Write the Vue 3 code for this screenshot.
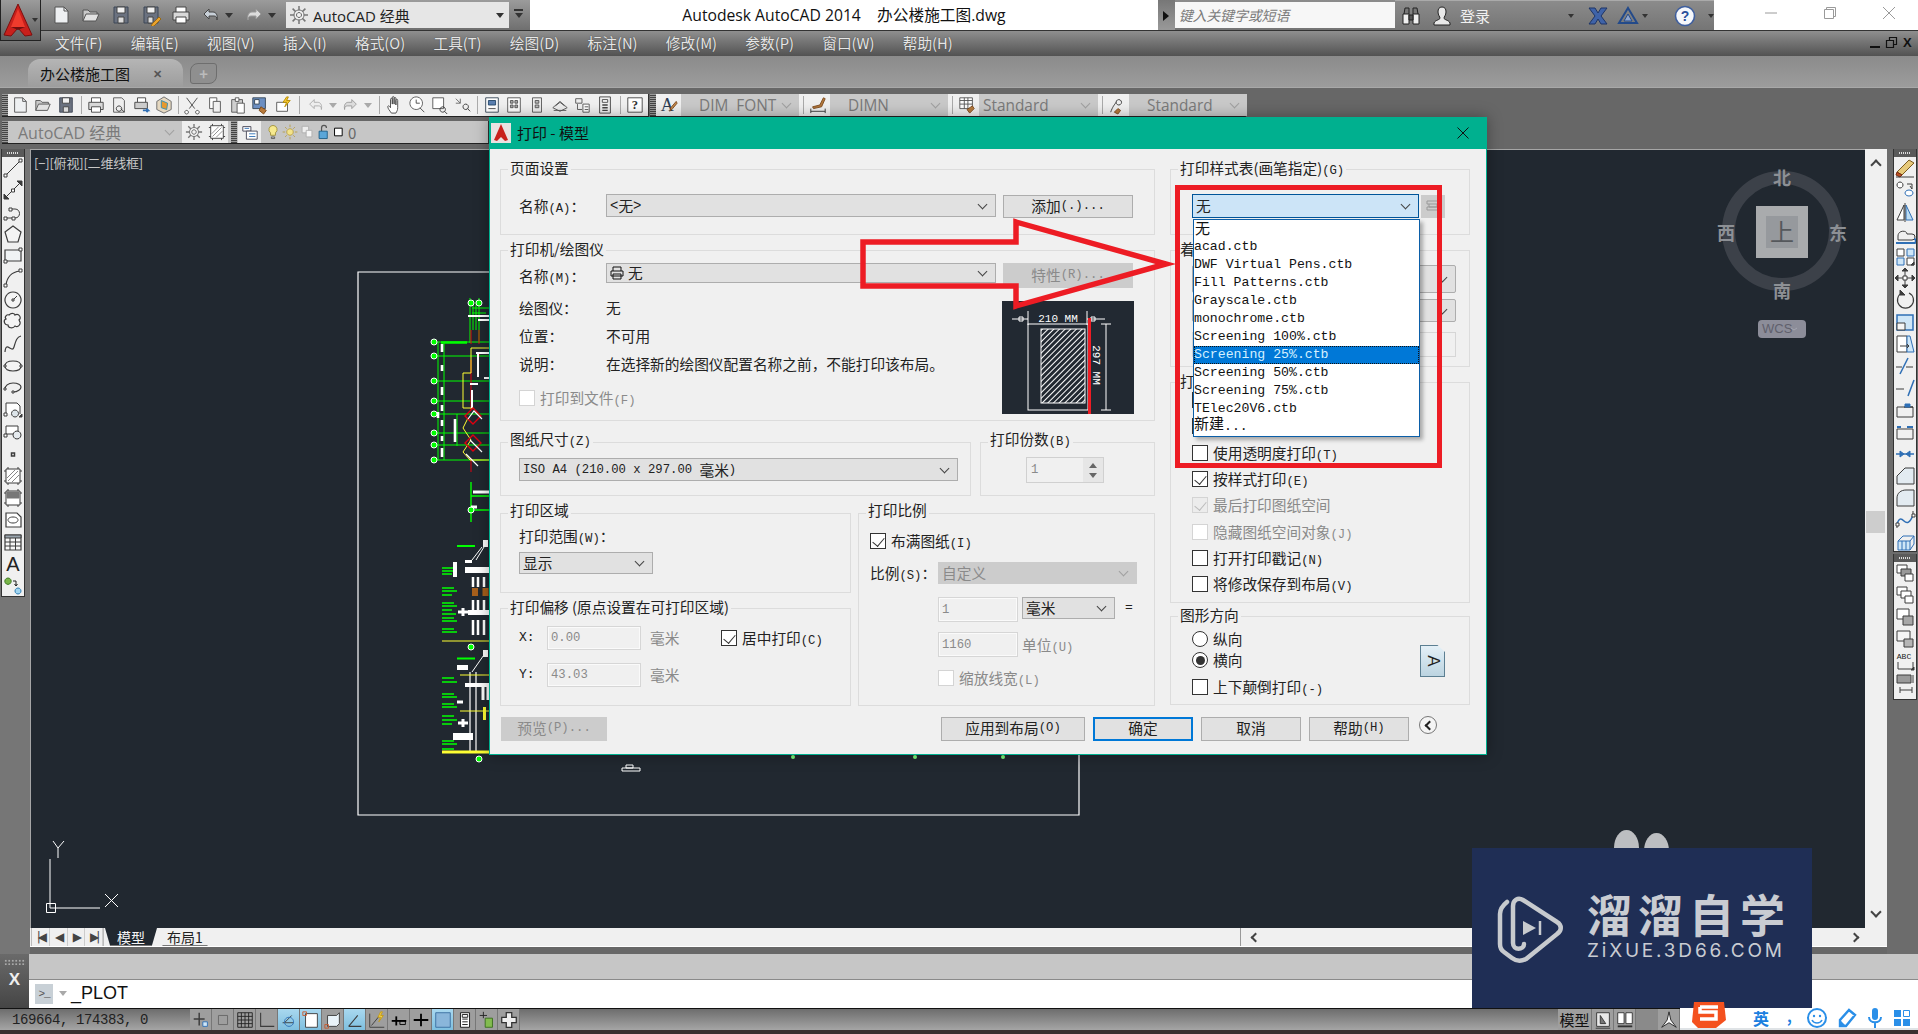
<script setup>
import { h } from 'vue'

const K = '#3c3c3c'
const L = '#2f6fb5'
const ICONS = {
  new: [['M5 3h9l4 4v12H5z', '#555', '#eef0f2'], ['M14 3v4h4', '#555', 'none']],
  open: [['M3 17V6h5l2 2h7v2', '#555', '#c9c9c9'], ['M3 17l3-7h13l-3 7z', '#555', '#e2e2e2']],
  save: [['M4 3h14v16H4z', '#3d4656', '#6b7280'], ['M7 3h8v6H7z', '#444', '#f1f1f1'], ['M8 13h6v6H8z', '#444', '#ddd']],
  saveas: [['M4 3h14v16H4z', '#3d4656', '#6b7280'], ['M7 3h8v6H7z', '#444', '#f1f1f1'], ['M8 13h5v6H8z', '#444', '#ddd'], ['M12 20l7-7 2 2-7 7-3 1z', '#9a6a14', '#eaa32e']],
  print: [['M6 8V3h10v5', '#444', '#fff'], ['M3 8h16v8H3z', '#444', '#d8d8d8'], ['M6 13h10v6H6z', '#444', '#fff']],
  undo: [['M9 5L4 10l5 5v-3h5c2 0 3 1 3 4 1-5-1-8-4-8H9z', '#444', '#c8d0d8']],
  redo: [['M13 5l5 5-5 5v-3H8c-2 0-3 1-3 4-1-5 1-8 4-8h4z', '#9a9a9a', '#dcdcdc']],
  undog: [['M9 5L4 10l5 5v-3h5c2 0 3 1 3 4 1-5-1-8-4-8H9z', '#aaa', '#eee']],
  gear: [['M11 6a5 5 0 1 0 .01 0z', '#666', '#f2f2f2'], ['M11 8.500a2.500 2.500 0 1 0 .01 0z', '#666', 'none'], ['M11 2v4M11 16v4M2 11h4M16 11h4M4.600 4.600l3 3M14.400 14.400l3 3M4.600 17.400l3-3M14.400 7.600l3-3', '#777', 'none', 1.5]],
  preview: [['M5 3h9l3 3v13H5z', '#555', '#eee'], ['M11 12a3 3 0 1 0 .01 0zM13 15l4 4', '#333', 'none']],
  publish: [['M6 8V3h9v5', '#444', '#fff'], ['M3 8h14v7H3z', '#444', '#ccc'], ['M12 17h6l-2-2M18 17l-2 2', L, 'none', 2]],
  d3: [['M11 2l8 5v9l-8 4-8-4V7z', '#666', '#e5d8c0'], ['M8 6l7 3-1 7-6-2z', '#2f8fb5', '#e79a2d']],
  cut: [['M5 3l9 12M17 3L8 15', '#444', 'none'], ['M5 17a2 2 0 1 0 .01 0zM17 17a2 2 0 1 0 .01 0z', '#444', '#fff']],
  copy: [['M5 3h8v12H5z', '#555', '#fff'], ['M9 7h8v12H9z', '#555', '#f1f1f1']],
  paste: [['M4 5h12v14H4z', '#555', '#cfcfcf'], ['M8 3h4v4H8z', '#555', '#fff'], ['M10 9h8v11h-8z', '#555', '#fff']],
  match: [['M3 3h14v12H3z', '#345', '#6c8fc2'], ['M5 5h5v5H5z', '#345', '#fff'], ['M12 13l6 4-3 4-5-4z', '#7a4a1a', '#b97a3a']],
  bolt: [['M4 8h12v10H4z', '#555', '#fff'], ['M15 2l-4 6h4l-2 5 6-7h-4l2-4z', '#b58a00', '#f7c92f']],
  hand: [['M7 20c-2-3-4-5-4-7s2-1 3 1V5c0-2 2-2 2 0v5V3c0-2 2-2 2 0v7V4c0-2 2-2 2 0v7V6c0-2 2-2 2 0v8c0 3-1 4-2 6z', '#444', '#fff']],
  zoomr: [['M9 2a7 7 0 1 0 .01 0z', '#555', '#fff'], ['M9 5v4h4M13 14l5 5', '#444', 'none']],
  zoomw: [['M3 3h12v12H3z', '#555', '#fff'], ['M14 13a3 3 0 1 0 .01 0zM16 18l3 3', '#333', 'none']],
  zoomp: [['M3 4l5 5M8 4v5H3', '#666', 'none'], ['M14 10a3 3 0 1 0 .01 0zM16 15l3 3', '#333', 'none']],
  props: [['M4 3h14v16H4z', '#345', '#fff'], ['M7 6h8v5H7z', '#246', '#5a7fb0'], ['M7 15h8', '#444', 'none']],
  dc: [['M4 3h14v16H4z', '#555', '#fff'], ['M7 6h3v3H7zM12 6h3v3h-3zM7 11h3v3H7zM12 11h3v3h-3z', '#555', '#aaa']],
  tp: [['M6 3h10v16H6z', '#555', '#eee'], ['M9 6h4v3H9zM9 11h4v3H9z', '#555', '#bbb']],
  sheet: [['M3 14l8-7 8 7-8 4z', '#555', '#eee'], ['M6 12l5-4 5 4M4 17h14', '#555', 'none']],
  mkup: [['M4 4h7v5H4z', '#555', '#eee'], ['M12 10h7v9h-7z', '#555', '#fff'], ['M6 10v6h5M14 13h4M14 16h4', '#555', 'none']],
  calc: [['M5 2h12v18H5z', '#444', '#eee'], ['M8 5h6v3H8z', '#444', '#fff'], ['M8 11h6M8 14h6M8 17h6', '#444', 'none', 1.5]],
  help: [['M3 3h16v16H3z', '#444', '#fff'], { t: '?', x: 11, y: 16, s: 14, c: '#333', w: 'bold' }],
  layer: [['M3 5h9v5H3z', '#445', '#fff'], ['M7 10h12v9H7z', '#445', '#fff'], ['M5 7h5M10 13h7M10 16h7', L, 'none']],
  bulb: [['M11 3a5 5 0 0 1 3 9v3H8v-3a5 5 0 0 1 3-9z', '#9a8a30', '#f6e98e'], ['M9 17h4v2H9z', '#555', '#bbb']],
  sun: [['M11 7a4 4 0 1 0 .01 0z', '#b59b3a', '#f3e38b'], ['M11 2v3M11 17v3M2 11h3M17 11h3M5 5l2 2M15 15l2 2M5 17l2-2M15 7l2-2', '#b59b3a', 'none']],
  lay3: [['M5 4h8v8H5z', '#aaa', '#eee'], ['M10 9h7v8h-7z', '#aaa', '#f6f6f6']],
  lock: [['M8 10V6a3 3 0 0 1 6 0', '#555', 'none', 1.5], ['M5 10h10v9H5z', '#15577f', '#5ba6d8']],
  sq: [['M4 5h12v12H4z', '#000', '#fff', 1.5]],
  dimf: [{ t: 'A', x: 9, y: 18, s: 20, c: '#2d3e55' }, ['M13 14l6-7 1 2-5 6-3 3z', '#7c4a1e', '#c68a4c']],
  dimn: [['M3 18h16M3 15v5M19 15v5', '#333', 'none'], ['M5 13l8-2 4-8 2 1-4 9-9 2z', '#7c4a1e', '#b57a3c']],
  tab: [['M3 3h14v12H3z', '#555', '#fff'], ['M3 6h14M8 3v12M12 3v12M3 10h14', '#555', 'none'], ['M11 16l6-4 2 3-5 5z', '#7c4a1e', '#b57a3c']],
  ml: [['M4 19c2-6 4-8 6-11', '#333', 'none'], ['M13 5a3 3 0 1 0 .01 0z', '#333', 'none'], ['M8 19l4-4 3 2-3 4z', '#7c4a1e', '#b57a3c']],
  // left toolbar
  line: [['M4 18L18 4', K, 'none'], ['M2 17h3v3H2zM17 2h3v3h-3z', K, '#fff']],
  xline: [['M3 19L19 3', K, 'none'], ['M9.500 10h3v3h-3z', K, '#fff'], ['M2 15v5h5zM15 2h5v5z', K, K]],
  pline: [['M4 17h9c6 0 6-9 0-9H9', K, 'none'], ['M2 16h3v3H2zM10 16h3v3h-3zM7 7h3v3H7z', K, '#fff']],
  polygon: [['M11 3l8 6-3 10H6L3 9z', K, '#f4f4f4', 1.2]],
  rect: [['M3 5h16v11H3z', K, '#f0f3f5', 1.2], ['M2 15h3v3H2zM17 3h3v3h-3z', K, '#fff']],
  arc: [['M4 18C5 10 10 5 18 4', K, 'none', 1.2], ['M2 17h3v3H2zM17 2h3v3h-3z', K, '#fff']],
  circle: [['M11 3a8 8 0 1 0 .01 0z', K, '#f4f4f4', 1.2], ['M10 10h2v2h-2zM12 10l3-3', K, 'none']],
  cloud: [['M7 4c3-3 6-1 6 0 4-2 7 3 4 5 3 4-1 8-4 6-2 3-7 2-7-1-4 0-5-5-2-6-2-2 1-5 3-4z', K, '#f4f4f4', 1.2]],
  spline: [['M3 19c1-12 7 2 9-5s3-10 7-11', K, 'none', 1.2]],
  ellipse: [['M11 6c5 0 8 2 8 5s-3 5-8 5-8-2-8-5 3-5 8-5z', K, '#f4f4f4', 1.2], ['M2 10h2v2H2zM18 10h2v2h-2z', K, '#fff']],
  earc: [['M3 12c0-3 3-6 8-6s8 2 8 4-3 5-8 5', K, 'none', 1.2], ['M2 11h2v2H2zM10 14h2v2h-2z', K, '#fff']],
  insert: [['M4 15V4h11l3 3v8', K, '#fff'], ['M13 11a3.500 3.500 0 1 0 .01 0z', K, '#dde5ea'], ['M2 14h3v3H2z', K, '#fff'], ['M17 18l3-3v3z', K, K]],
  block: [['M4 13V5h12v8z', K, '#fff'], ['M15 10a4 4 0 1 0 .01 0z', K, '#e6ebef'], ['M2 13h3v3H2z', K, '#fff']],
  point: [['M9.500 10h3v3h-3z', K, 'none', 1.5]],
  hatch: [['M4 4h14v14H4zM2 6h2M18 6h2M2 16h2M18 16h2M6 2v2M16 2v2M6 18v2M16 18v2', K, '#fff'], ['M5 13l8-8M6 16l10-10M10 17l7-7', '#888', 'none']],
  grad: [['M4 4h14v14H4zM2 6h2M18 6h2M2 16h2M18 16h2M6 2v2M16 2v2M6 18v2M16 18v2', K, '#fff'], ['M5 5h12v6H5z', '#777', '#777']],
  region: [['M4 4h11l4 4v10H4z', K, '#fff', 1.2], ['M11 8c4 0 5 2 5 3s-1 3-5 3-5-2-5-3 1-3 5-3z', K, 'none']],
  table: [['M3 4h16v15H3z', K, '#f8f8f8', 1.2], ['M3 4h16v3H3z', K, '#9aa5ae'], ['M3 11h16M3 15h16M8 7v12M13.500 7v12', K, 'none']],
  atext: [{ t: 'A', x: 11, y: 18, s: 20, c: '#222', f: 'Liberation Sans' }],
  addsel: [['M6 3a3.200 3.200 0 1 0 .01 0z', '#3f7a22', '#79b64a'], ['M11 6h3v5M12.500 9l1.500 2 1.500-2', '#222', 'none'], ['M16 13a3 3 0 1 0 .01 0z', '#2f7fb5', '#9fd4f0']],
  // right
  erase: [['M3 15L15 3l5 3-12 12z', '#7a5a20', '#e7c97a'], ['M3 15l5 3-2 2-4-2z', '#7a2a10', '#b94e20'], ['M2 20h18', K, 'none']],
  copyo: [['M6 3a3 3 0 1 0 .01 0z', K, '#fff'], ['M15 11a4 3 0 1 0 .01 0z', L, '#fff'], ['M13 5h5v5M16 7l2 3', K, 'none']],
  mirror: [['M10 4v15L3 19z', K, '#fff'], ['M12 4v15l7 0z', L, '#bcdcf3'], ['M11 2v19', K, 'none']],
  offset: [['M4 17v-4c0-6 9-6 9-2h5a2 2 0 0 1 0 6z', K, 'none'], ['M2 20h18a2 2 0 0 0 0-4', L, 'none', 2]],
  array: [['M3 4h7v7H3z', K, '#fff'], ['M13 4h7v7h-7zM3 13h7v7H3z', L, '#cfe6f7'], ['M13 13h7v7h-7z', K, '#fff'], ['M17 20l3-3v3z', K, K]],
  move: [['M11 2v18M2 11h18', K, 'none'], ['M11 1l-3 3h6zM11 21l-3-3h6zM1 11l3-3v6zM21 11l-3-3v6z', K, K], ['M9 9h4v4H9z', K, '#fff']],
  rotate: [['M15 4a8 8 0 1 1-7 0', K, 'none', 1.2], ['M6 1v5h5z', K, K]],
  scale: [['M3 4h16v15H3z', L, '#cfe6f7', 1.5], ['M3 12h8v7H3z', K, '#f6f6f6']],
  stretch: [['M3 3h10v16H3z', K, '#fff'], ['M13 3h3l4 16h-7z', L, '#cfe6f7'], ['M6 13h9M13 11l2 2-2 2', K, 'none']],
  trim: [['M2 12h6M12 12h7', K, 'none'], ['M6 19l8-16', L, 'none', 1.5]],
  extend: [['M2 12h8', K, 'none'], ['M14 19l6-16', L, 'none', 1.5]],
  brk1: [['M3 8h16v10H3z', K, 'none'], ['M10 8h9', '#222', 'none'], ['M11 5h5v3h-5z', L, L]],
  brk2: [['M3 8h16v10H3z', K, 'none'], ['M3 6h4M13 6h6', L, 'none', 2]],
  join: [['M2 11h18', L, 'none', 1.5], ['M6 8l4 3-4 3zM16 8l-4 3 4 3z', L, L]],
  chamfer: [['M3 19V11l8-8h9v16z', K, '#e3ebf1']],
  fillet: [['M3 19v-8c0-5 4-8 9-8h8v16z', K, '#e3ebf1']],
  blend: [['M3 19v-4M19 6V2', K, 'none'], ['M3 15c2-6 4-6 7-3s6 2 9-6', L, 'none', 1.5], ['M2 14h3v3H2zM18 5h3v3h-3z', K, '#fff']],
  explode: [['M4 10h12v9H4z', L, '#cfe6f7'], ['M4 10l5-5h11l-4 5M16 19l4-6V5', L, 'none'], ['M8 10v9M12 10v9', L, 'none']],
  ord1: [['M3 3h10v8H3z', K, '#fff'], ['M7 7h10v7H7z', K, '#999'], ['M11 12h8v7h-8z', K, '#fff']],
  ord2: [['M3 3h10v8H3z', K, '#fff'], ['M7 7h10v7H7z', K, '#fff'], ['M11 12h8v7h-8z', K, '#fff']],
  ord3: [['M3 3h12v10H3z', K, '#fff'], ['M9 10h10v9H9z', K, '#a7a7a7']],
  ord4: [['M3 3h13v10H3z', K, '#f4f4f4'], ['M10 11h9v8h-9z', K, '#b5b5b5']],
  ordt: [{ t: 'ABC', x: 10, y: 9, s: 8, c: '#222', f: 'Liberation Mono' }, ['M4 12v7h15v-7', K, 'none'], ['M17 20l3-3v3z', K, K]],
  ordd: [['M3 3h14v8H3z', K, '#999'], ['M19 3v8M6 18h12M6 15v6M18 15v6', K, 'none']],
  // status
  snap: [['M9 3v14M3 10h12', K, 'none', 1.6], ['M13 13h5v5h-5z', L, '#cfe6f7']],
  dots: [['M6 6h10v10H6z', '#666', 'none', 1]],
  gridi: [['M3 3h16v16H3zM3 7h16M3 11h16M3 15h16M7 3v16M11 3v16M15 3v16', '#222', 'none', 1]],
  ortho: [['M4 3v15h15', K, 'none', 1.2]],
  polar: [['M6 14l8-8M4 14h12', K, 'none'], ['M11 8a5 5 0 1 0 .01 0z', L, 'none']],
  osnap: [['M5 4h13v15H5z', K, '#fff'], ['M2 2h4v4H2z', '#c65a30', 'none']],
  d3o: [['M5 6h10l3-3v12l-3 3H5z', K, '#eaf3f9'], ['M2 16h4v4H2z', '#c65a30', 'none']],
  dyn: [['M4 18h14M4 18L14 6', K, 'none', 1.2]],
  dynp: [['M3 19V4M3 19h16M5 17L14 6', K, 'none'], ['M15 2l-3 6h3l-2 5 5-7h-3l2-4z', '#c29a1a', '#f2cf45']],
  lw: [['M3 12h16', '#000', 'none', 2], ['M8 7v10', '#000', 'none', 2], ['M12 12h6v4h-6z', '#000', 'none']],
  plus: [['M3 11h16M11 4v14', '#000', 'none', 2]],
  tpy: [['M3 3h16v16H3z', '#3a6fa0', '#8ab6da']],
  qc: [['M6 3h10v16H6z', '#111', '#fff'], ['M8 5h6v3H8zM8 10h6M8 13h6M8 16h6', '#111', 'none']],
  sel: [['M7 2v7M3 6h8', '#222', 'none'], ['M9 9h8v10H9z', '#3b6d1d', '#83bc4f']],
  cross: [['M8 3h6v5h5v6h-5v5H8v-5H3V8h5z', '#333', '#eee', 1.4]],
  modelv: [['M4 3h14v15H4z', '#333', '#e8e8e8'], ['M8 6v9h6z', '#333', '#777'], ['M3 20h16', '#333', 'none']],
  layv: [['M3 3h7v12H3zM12 3h7v12h-7z', '#333', '#fff'], ['M3 18h16', '#333', 'none', 2]],
  anno: [['M11 2l2 9 6 8-8-5-8 5 6-8z', '#222', '#f8f8f8']]
}

const Ico = (p) =>
  h(
    'svg',
    { width: p.s || 22, height: p.s || 22, viewBox: '0 0 22 22', style: 'display:block;flex:none' },
    (ICONS[p.n] || []).map((e, i) =>
      Array.isArray(e)
        ? h('path', { key: i, d: e[0], stroke: e[1], fill: e[2], 'stroke-width': e[3] || 1 })
        : h(
            'text',
            {
              key: i,
              x: e.x,
              y: e.y,
              fill: e.c,
              'font-size': e.s,
              'text-anchor': 'middle',
              'font-family': e.f || 'Liberation Serif',
              'font-weight': e.w || 'normal'
            },
            e.t
          )
    )
  )
Ico.props = ['n', 's']

const menus = ['文件(F)', '编辑(E)', '视图(V)', '插入(I)', '格式(O)', '工具(T)', '绘图(D)', '标注(N)', '修改(M)', '参数(P)', '窗口(W)', '帮助(H)']

const tb1a = [
  { n: 'new' }, { n: 'open' }, { n: 'save' }, { sep: 'sp8' },
  { n: 'print' }, { n: 'preview' }, { n: 'publish' }, { n: 'd3' }, { sep: 'sp5' },
  { n: 'cut' }, { n: 'copy' }, { n: 'paste' }, { n: 'match' }, { n: 'bolt' }, { sep: 'sp10' },
  { n: 'undog' }, { drop: 1 }, { n: 'redo' }, { drop: 1 }, { sep: 'sp10' },
  { n: 'hand' }, { n: 'zoomr' }, { n: 'zoomw' }, { n: 'zoomp' }, { sep: 'sp6' },
  { n: 'props' }, { n: 'dc' }, { n: 'tp' }, { n: 'sheet' }, { n: 'mkup' }, { n: 'calc' }, { sep: 'sp7' },
  { n: 'help' }
]
const tb1b = [
  { n: 'dimf', t: 'DIM  FONT', c: 'c1' },
  { n: 'dimn', t: 'DIMN', c: 'c1' },
  { n: 'tab', t: 'Standard', c: 'c2' },
  { n: 'ml', t: 'Standard', c: 'c1' }
]
const leftTools = ['line', 'xline', 'pline', 'polygon', 'rect', 'arc', 'circle', 'cloud', 'spline', 'ellipse', 'earc', 'insert', 'block', 'point', 'hatch', 'grad', 'region', 'table', 'atext', 'addsel']
const rightTools1 = ['erase', 'copyo', 'mirror', 'offset', 'array', 'move', 'rotate', 'scale', 'stretch', 'trim', 'extend', 'brk1', 'brk2', 'join', 'chamfer', 'fillet', 'blend', 'explode']
const rightTools2 = ['ord1', 'ord2', 'ord3', 'ord4', 'ordt', 'ordd']
const statusIcons = [
  { n: 'snap' }, { n: 'dots' }, { n: 'gridi' }, { n: 'ortho' }, { n: 'polar', a: 1 }, { n: 'osnap', a: 1 }, { n: 'd3o' },
  { n: 'dyn', a: 1 }, { n: 'dynp' }, { n: 'lw' }, { n: 'plus' }, { n: 'tpy', a: 1 }, { n: 'qc' }, { n: 'sel' }, { n: 'cross' }
]
const dropItems = ['acad.ctb', 'DWF Virtual Pens.ctb', 'Fill Patterns.ctb', 'Grayscale.ctb', 'monochrome.ctb', 'Screening 100%.ctb', 'Screening 25%.ctb', 'Screening 50%.ctb', 'Screening 75%.ctb', 'TElec20V6.ctb']
const optRows = [
  { t: '后台打印', k: '(K)', c: 1 },
  { t: '打印对象线宽', k: '', c: 1 },
  { t: '使用透明度打印', k: '(T)' },
  { t: '按样式打印', k: '(E)', c: 1 },
  { t: '最后打印图纸空间', k: '', c: 1, d: 1 },
  { t: '隐藏图纸空间对象', k: '(J)', d: 1 },
  { t: '打开打印戳记', k: '(N)' },
  { t: '将修改保存到布局', k: '(V)' }
]

// drawing geometry in page coordinates
const G = '#00ff00'
const W = '#ffffff'
const Y = '#ffff33'
const R = '#e00010'
const draw = [
  ['M358 272H1079V815H358z', W, 1.2],
  // plan: axis and grid
  ['M434 342h56M434 356h56M434 381h56M434 401h56M434 414h56M434 433h56M434 445h56M434 460h56', G, 1],
  ['M438 342v118M444 342v118M457 414v32M470 298v45M479 298v45', G, 1],
  ['M441 342.500h26', G, 2.5],
  ['M442 344v8M442 365v6M442 387v8M442 405v6M442 420v6M442 436v5M442 448v9M455 419v23M438 412v6', W, 2.6],
  ['M471 330v14M479 330v14M471 458v14M471 360v50M479 352v4', R, 1],
  ['M471 348h19M463 373V408H473M463 373h8M471 348v25M468 418l-5 10 8 12 -8 12 7 8h20', Y, 1],
  ['M478 353v24M470 384h8M472 390v18M484 378h6M476 353h14', W, 2],
  ['M473 408l8 8-8 8-8-8zM473 435l8 8-8 8-8-8z', R, 1.4],
  ['M468 419l6-8 8 8M466 454l12 12M470 440l12 12', W, 1.2],
  ['M472 308h18M472 313h14M473 300v30M476 300v30', G, 1],
  ['M468 316h22M478 320h12', W, 2],
  ['M471 482v40M471 510h19M471 496h19', G, 1.4],
  ['M473 492h17M471 507h6', W, 3],
  // elevation A
  ['M442 568h12M442 571h15M442 574h10M442 588h12M442 591h15M442 595h10M442 603h12M442 606h15M442 610h10M442 614h14M442 618h12M442 621h15M442 629h12M442 632h15', G, 1.6],
  ['M457 546h18', G, 2],
  ['M472 560l10-13M476 560l8-13', W, 1],
  ['M485.500 540v7', W, 5],
  ['M465 561.500h7', W, 3],
  ['M465 570h25', W, 6],
  ['M473 577v10M478 577v10M484 577v10M473 600v10M478 600v10M484 600v10M473 620v15M478 620v15M484 620v15', W, 2.5],
  ['M475 588v8M485.500 588v8', '#a8601c', 6],
  ['M468 612.500h22', W, 5],
  ['M455 562v15', W, 4],
  ['M458 612h10M463 608v8', W, 3],
  ['M442 641h48', Y, 1.2],
  // elevation B
  ['M457 658.500h18', G, 2],
  ['M485.500 650v7', W, 5],
  ['M457 667.500h11', W, 5],
  ['M465 685h25', W, 4],
  ['M457 702h6', W, 3],
  ['M453 736.500h20', W, 7],
  ['M458 723h10M463 719v8', W, 3],
  ['M442 678h12M442 682h15M442 694h12M442 697h15M442 704h12M442 707h15M442 716h12M442 720h15M442 724h10M442 741h12M442 744h15M442 749h12', G, 1.6],
  ['M470 672v80M476 672v80', W, 1.2],
  ['M483 687v13M488 687v13', W, 3],
  ['M484.500 707v13', Y, 3],
  ['M472 672l14-20', W, 1],
  ['M460 675h30M460 711h30', Y, 1],
  ['M442 752h48', Y, 3],
  // below the dialog
  ['M622 768h18v3h-18zM626 765h7v3h-7z', W, 1]
]
const dotsW = [[434, 342], [434, 356], [434, 381], [434, 401], [434, 414], [434, 433], [434, 445], [434, 460], [471, 303], [479, 303], [471, 510], [471, 647], [479, 759]]
const dotsG = [[793, 757], [915, 757], [1003, 757]]
</script>

<template>
  <div class="app">
    <!-- title bar -->
    <header class="titlebar">
      <div class="qa">
        <button class="qa-i"><Ico n="new" /></button>
        <button class="qa-i"><Ico n="open" /></button>
        <button class="qa-i"><Ico n="save" /></button>
        <button class="qa-i"><Ico n="saveas" /></button>
        <button class="qa-i"><Ico n="print" /></button>
        <button class="qa-i"><Ico n="undo" /></button>
        <i class="tri qa-d1"></i>
        <button class="qa-i"><Ico n="redo" /></button>
        <i class="tri qa-d1"></i>
        <div class="qa-combo">
          <Ico n="gear" />
          <span>AutoCAD 经典</span>
          <i class="tri tri-r"></i>
        </div>
        <div class="qa-more"><i class="tri"></i></div>
      </div>
      <div class="apptitle">Autodesk AutoCAD 2014 &nbsp;&nbsp; 办公楼施工图.dwg</div>
      <div class="infobar">
        <div class="ib-arrow"></div>
        <div class="ib-search">键入关键字或短语</div>
        <div class="ib-tools">
          <svg width="20" height="22" viewBox="0 0 20 22"><path d="M3 9l1-6h4v6M12 9V3h4l1 6" fill="#777" stroke="#222" /><path d="M2 9h6v10H2zM12 9h6v10h-6z" fill="#f0f0f0" stroke="#222" /><path d="M8 10h4v5H8z" fill="#555" stroke="#222" /></svg>
          <svg class="ib-user" width="22" height="22" viewBox="0 0 22 22"><path d="M11 2c3 0 4 2 4 5s-2 5-2 6c0 2 5 2 6 5v2H3v-2c1-3 6-3 6-5 0-1-2-3-2-6s1-5 4-5z" fill="#e8e8e8" stroke="#222" /></svg>
          <span class="ib-login">登录</span>
          <i class="tri ib-d1"></i>
          <svg width="22" height="20" viewBox="0 0 22 20"><path d="M2 2h6l3 5 3-5h6l-6 8 6 8h-6l-3-5-3 5H2l6-8z" fill="#3f63a8" stroke="#1e3566" /></svg>
          <svg class="ib-tri" width="22" height="20" viewBox="0 0 22 20"><path d="M11 2l9 15H2z" fill="none" stroke="#234a8a" stroke-width="2" /><path d="M11 8l4 7H7z" fill="#8fa6cf" stroke="#234a8a" /></svg>
          <i class="tri ib-d2"></i>
          <svg class="ib-help" width="22" height="22" viewBox="0 0 22 22"><circle cx="11" cy="11" r="9.500" fill="#f5f7fb" stroke="#3e5e9e" stroke-width="1.600" /><text x="11" y="16" text-anchor="middle" font-size="14" font-weight="bold" fill="#2b4f9c" font-family="Liberation Sans">?</text></svg>
          <i class="tri ib-d3"></i>
        </div>
      </div>
      <div class="winctl">
        <svg width="14" height="14" viewBox="0 0 14 14"><path d="M1 7h12" stroke="#9a9a9a" fill="none" /></svg>
        <svg width="14" height="14" viewBox="0 0 14 14"><path d="M1.500 3.500h9v9h-9zM3.500 3.500v-2h9v9h-2" stroke="#9a9a9a" fill="none" /></svg>
        <svg width="14" height="14" viewBox="0 0 14 14"><path d="M1 1l12 12M13 1L1 13" stroke="#9a9a9a" fill="none" /></svg>
      </div>
    </header>

    <!-- menu bar -->
    <nav class="menubar">
      <span v-for="m in menus" :key="m" class="menu">{{ m }}</span>
      <div class="mdi">
        <i class="mdi-min"></i>
        <svg width="13" height="13" viewBox="0 0 13 13"><path d="M1.500 4.500h7v7h-7zM4.500 4.500v-3h7v7h-3" fill="none" stroke="#111" stroke-width="1.200" /></svg>
        <span>X</span>
      </div>
    </nav>

    <!-- document tabs -->
    <div class="docbar">
      <div class="doctab"><span>办公楼施工图</span><b>✕</b></div>
      <div class="docplus"><i>+</i></div>
    </div>

    <!-- toolbars -->
    <div class="tbzone">
      <div class="tbrow1">
        <div class="tb tb1">
          <i class="grip"></i>
          <template v-for="(t, i) in tb1a" :key="i">
            <span v-if="t.sep" class="sep" :class="t.sep"></span>
            <span v-else-if="t.drop" class="tdrop"><i class="tri tri-g"></i></span>
            <span v-else class="slot"><Ico :n="t.n" /></span>
          </template>
        </div>
        <div class="tb tb2">
          <i class="grip"></i>
          <div v-for="(t, i) in tb1b" :key="i" class="tbc">
            <span v-if="i" class="sep sep-n"></span>
            <span class="slot-c"><Ico :n="t.n" /></span>
            <span class="gcombo" :class="t.c">{{ t.t }}<i class="chev chev-g"></i></span>
          </div>
        </div>
      </div>
      <div class="tbrow2">
        <div class="tb tb3">
          <i class="grip"></i>
          <span class="wcombo">AutoCAD 经典<i class="chev chev-g"></i></span>
          <span class="slot slot-w"><Ico n="gear" /></span>
          <span class="slot slot-w"><Ico n="hatch" /></span>
          <i class="grip grip-m"></i>
          <span class="slot slot-w"><Ico n="layer" /></span>
          <div class="layerc">
            <Ico n="bulb" :s="18" />
            <Ico n="sun" :s="18" />
            <Ico n="lay3" :s="18" />
            <Ico n="lock" :s="18" />
            <Ico n="sq" :s="14" />
            <span class="lay0">0</span>
          </div>
        </div>
      </div>
    </div>

    <!-- work area -->
    <div class="work">
      <aside class="leftcol">
        <div class="vtool">
          <i class="vgrip"></i>
          <span v-for="n in leftTools" :key="n" class="vslot"><Ico :n="n" /></span>
        </div>
      </aside>
      <main class="center">
        <div class="vp-row">
          <div class="viewport">
            <div class="vp-label">[−][俯视][二维线框]</div>
            <svg class="drawing" width="1835" height="779" viewBox="30 149 1835 779">
              <path v-for="(d, i) in draw" :key="i" :d="d[0]" :stroke="d[1]" :stroke-width="d[2]" fill="none" />
              <circle v-for="(c, i) in dotsW" :key="'w' + i" :cx="c[0]" :cy="c[1]" r="3" fill="#00ff00" stroke="#fff" />
              <circle v-for="(c, i) in dotsG" :key="'g' + i" :cx="c[0]" :cy="c[1]" r="2" fill="#7dff7d" />
              <!-- UCS -->
              <path d="M50 859V908H100M46.500 903.500h9v9h-9z" stroke="#fff" fill="none" />
              <path d="M53 841l5 7 6-7M58 848v10M105 894l13 13M118 894l-13 13" stroke="#fff" fill="none" />
              <!-- view cube -->
              <circle cx="1782" cy="231" r="53.500" fill="none" stroke="#3c4149" stroke-width="13" />
              <rect x="1756" y="206" width="52" height="52" fill="#a9abad" />
              <rect x="1766" y="216" width="32" height="32" fill="#96999d" />
              <text x="1782" y="241" class="cube-top">上</text>
              <text x="1782" y="185" class="cube-n">北</text>
              <text x="1782" y="298" class="cube-n">南</text>
              <text x="1726" y="240" class="cube-n">西</text>
              <text x="1838" y="240" class="cube-n">东</text>
              <rect x="1758" y="320" width="48" height="18" rx="4" fill="#8c8d99" />
              <text x="1762" y="333" class="cube-w">WCS</text>
              <path d="M1791 328l3 2 3-2" stroke="#a5a6b0" fill="none" />
            </svg>
          </div>
          <div class="vscroll">
            <i class="sc-up"></i>
            <i class="sc-thumb"></i>
            <i class="sc-down"></i>
          </div>
        </div>
        <div class="layouttabs">
          <div class="navbtns">
            <span>|◀</span><span>◀</span><span>▶</span><span>▶|</span>
          </div>
          <div class="ltab ltab-on">模型</div>
          <div class="ltab">布局1</div>
          <div class="hs-spacer"></div>
          <i class="hs-l"></i>
          <div class="hs-track"></div>
          <i class="hs-r"></i>
        </div>
      </main>
      <aside class="rightcol">
        <div class="vtool vtool-r1">
          <i class="vgrip"></i>
          <span v-for="n in rightTools1" :key="n" class="vslot"><Ico :n="n" /></span>
        </div>
        <div class="vtool vtool-r2">
          <i class="vgrip"></i>
          <span v-for="n in rightTools2" :key="n" class="vslot"><Ico :n="n" /></span>
        </div>
      </aside>
    </div>

    <!-- command line -->
    <div class="cmd">
      <div class="cmd-side">
        <i class="cmd-grip"></i>
        <b>X</b>
      </div>
      <div class="cmd-main">
        <div class="cmd-hist"></div>
        <div class="cmd-line">
          <span class="cmd-ic">&gt;_</span>
          <i class="tri tri-g"></i>
          <span class="cmd-text">_PLOT</span>
        </div>
      </div>
    </div>

    <!-- status bar -->
    <footer class="status">
      <span class="coords">169664, 174383, 0</span>
      <div class="st-icons">
        <span v-for="(s, i) in statusIcons" :key="i" class="st-i" :class="{ 'st-on': s.a }"><Ico :n="s.n" :s="20" /></span>
      </div>
      <div class="st-right">
        <span class="st-model">模型</span>
        <span class="st-i"><Ico n="modelv" :s="20" /></span>
        <span class="st-i"><Ico n="layv" :s="20" /></span>
        <span class="st-gap"></span>
        <span class="st-i"><Ico n="anno" :s="20" /></span>
      </div>
    </footer>
    <div class="wall"></div>

    <!-- application logo, hangs over the menu bar -->
    <div class="applogo">
      <svg width="30" height="34" viewBox="0 0 30 34">
        <path d="M15 1l14 31-7 1-7-8-7 8-7-1z" fill="#c8201c" stroke="#7d0f0e" />
        <path d="M15 6l7 18H8z" fill="#ef3b2d" />
        <path d="M8 24h14l-7 3z" fill="#701010" />
      </svg>
      <i class="tri logo-d"></i>
    </div>

    <!-- plot dialog -->
    <section class="dlg">
      <div class="dlg-title">
        <svg class="dlg-ic" width="20" height="20" viewBox="0 0 20 20"><rect width="20" height="20" fill="#e9e2e2" /><path d="M10 1l7 16-3 1-4-4-4 4-3-1z" fill="#c8201c" /></svg>
        <span>打印 - 模型</span>
        <svg class="dlg-x" width="12" height="12" viewBox="0 0 12 12"><path d="M0.500 0.500l11 11M11.500 0.500l-11 11" stroke="#111" fill="none" /></svg>
      </div>
      <div class="dlg-body">
        <div class="dlg-cols">
          <div class="dl">
            <div class="grp g-page">
              <span class="gl">页面设置</span>
              <div class="row row-top">
                <span class="lb lb23">名称<span class="m">(A)</span>：</span>
                <div class="combo cw390 h23"><span class="m-s">&lt;</span>无<span class="m-s">&gt;</span><i class="chev"></i></div>
                <button class="btn btn-add">添加<span class="m">(.)...</span></button>
              </div>
            </div>
            <div class="grp g-printer">
              <span class="gl">打印机/绘图仪</span>
              <div class="row row-top">
                <span class="lb lb25">名称<span class="m">(M)</span>：</span>
                <div class="combo cw390 h20">
                  <svg class="pr-ic" width="14" height="14" viewBox="0 0 14 14"><path d="M3 5V1h8v4M1 5h12v5H1zM3 8h8v5H3z" fill="none" stroke="#111" /></svg>无<i class="chev"></i>
                </div>
                <button class="btn btn-dis btn-prop">特性<span class="m">(R)...</span></button>
              </div>
              <div class="pr-main">
                <div class="pr-info">
                  <div class="info"><span class="lb">绘图仪：</span><span>无</span></div>
                  <div class="info"><span class="lb">位置：</span><span>不可用</span></div>
                  <div class="info"><span class="lb">说明：</span><span>在选择新的绘图仪配置名称之前，不能打印该布局。</span></div>
                  <div class="ck ck-file"><i class="cb cb-dis"></i><span class="dis">打印到文件<span class="m">(F)</span></span></div>
                </div>
                <svg class="paper" width="132" height="113" viewBox="0 0 132 113">
                  <defs>
                    <pattern id="hat" width="4" height="4" patternUnits="userSpaceOnUse" patternTransform="rotate(45)">
                      <rect width="1" height="4" fill="#fff" />
                    </pattern>
                  </defs>
                  <rect width="132" height="113" fill="#222932" />
                  <path d="M10 18h16M26 10v14M85 10v14M85 18h18M17 16h4v4h-4zM89 16h4v4h-4zM99 23h10M104 23v86M99 109h10" fill="none" stroke="#fff" />
                  <rect x="26" y="23" width="60" height="86" fill="none" stroke="#fff" />
                  <rect x="39" y="28" width="44" height="74" fill="url(#hat)" stroke="#fff" />
                  <text x="56" y="21" class="p-t" text-anchor="middle">210 MM</text>
                  <text x="0" y="0" class="p-t" transform="translate(91 64) rotate(90)" text-anchor="middle">297 MM</text>
                  <path d="M87.500 17v96" stroke="#ed1c24" stroke-width="3" fill="none" />
                </svg>
              </div>
            </div>
            <div class="gr-row r-size">
              <div class="grp g-size">
                <span class="gl gl-up">图纸尺寸<span class="m">(Z)</span></span>
                <div class="combo h23 cmono">ISO A4 (210.00 x 297.00 <span class="cj">毫米</span>)<i class="chev"></i></div>
              </div>
              <div class="grp g-copies">
                <span class="gl gl-up">打印份数<span class="m">(B)</span></span>
                <div class="spin"><span class="m dis">1</span><span class="spb"><i></i><i></i></span></div>
              </div>
            </div>
            <div class="gr-row r-area">
              <div class="stack">
                <div class="grp g-area">
                  <span class="gl gl-up">打印区域</span>
                  <div class="lb-s">打印范围<span class="m">(W)</span>：</div>
                  <div class="combo cw134 h22">显示<i class="chev"></i></div>
                </div>
                <div class="grp g-offs">
                  <span class="gl">打印偏移 (原点设置在可打印区域)</span>
                  <div class="row">
                    <span class="lb-x m">X:</span>
                    <span class="inp iw94 m dis">0.00</span>
                    <span class="dis unit">毫米</span>
                    <div class="ck"><i class="cb cb-on"></i><span>居中打印<span class="m">(C)</span></span></div>
                  </div>
                  <div class="row r-y">
                    <span class="lb-x m">Y:</span>
                    <span class="inp iw94 m dis">43.03</span>
                    <span class="dis unit">毫米</span>
                  </div>
                </div>
              </div>
              <div class="grp g-scale">
                <span class="gl gl-up">打印比例</span>
                <div class="ck"><i class="cb cb-on"></i><span>布满图纸<span class="m">(I)</span></span></div>
                <div class="row s-r1">
                  <span class="lb-sc">比例<span class="m">(S)</span>：</span>
                  <div class="combo combo-dis h22 cw199"><span class="dis">自定义</span><i class="chev chev-g"></i></div>
                </div>
                <div class="row s-r2">
                  <span class="inp iw80 m dis">1</span>
                  <div class="combo h22 cw93">毫米<i class="chev"></i></div>
                  <span class="eq m">=</span>
                </div>
                <div class="row s-r3">
                  <span class="inp iw80 m dis">1160</span>
                  <span class="dis unit2">单位<span class="m">(U)</span></span>
                </div>
                <div class="ck s-r4"><i class="cb cb-dis"></i><span class="dis">缩放线宽<span class="m">(L)</span></span></div>
              </div>
            </div>
          </div>

          <div class="dr">
            <div class="grp g-style">
              <span class="gl">打印样式表(画笔指定)<span class="m">(G)</span></span>
              <div class="row">
                <div class="combo combo-act cw227 h24">无<i class="chev"></i></div>
                <button class="btn btn-dis btn-st">
                  <svg width="16" height="16" viewBox="0 0 16 16"><path d="M2 3h12v3H2zM4 6v3h8V6M2 9h12v3H2z" fill="none" stroke="#999" /></svg>
                </button>
              </div>
            </div>
            <div class="grp g-shade">
              <span class="gl">着色视口选项</span>
              <div class="combo r-combo c28"><i class="chev"></i></div>
              <div class="combo r-combo c23"><i class="chev"></i></div>
              <div class="r-input"></div>
            </div>
            <div class="grp g-opts">
              <span class="gl">打印选项</span>
              <div v-for="o in optRows" :key="o.t" class="ck opt">
                <i class="cb" :class="{ 'cb-on': o.c, 'cb-dis': o.d }"></i>
                <span :class="{ dis: o.d }">{{ o.t }}<span class="m">{{ o.k }}</span></span>
              </div>
            </div>
            <div class="grp g-orient">
              <span class="gl">图形方向</span>
              <div class="or-main">
                <div class="or-list">
                  <div class="ck rd"><i class="radio"></i><span>纵向</span></div>
                  <div class="ck rd"><i class="radio radio-on"></i><span>横向</span></div>
                  <div class="ck rd-cb"><i class="cb"></i><span>上下颠倒打印<span class="m">(-)</span></span></div>
                </div>
                <div class="pageic">
                  <span>A</span>
                </div>
              </div>
            </div>
          </div>
        </div>
        <div class="dlg-btns">
          <button class="btn btn-dis btn-pre">预览<span class="m">(P)...</span></button>
          <button class="btn btn-apply">应用到布局<span class="m">(O)</span></button>
          <button class="btn btn-ok">确定</button>
          <button class="btn btn-std">取消</button>
          <button class="btn btn-std">帮助<span class="m">(H)</span></button>
          <span class="more"><i></i></span>
        </div>
      </div>

      <div class="drop">
        <div class="di di-cj">无</div>
        <div v-for="d in dropItems" :key="d" class="di" :class="{ 'di-sel': d === 'Screening 25%.ctb' }">{{ d }}</div>
        <div class="di"><span class="di-cjs">新建</span>...</div>
      </div>
    </section>

    <!-- red annotations -->
    <svg class="annot" width="1918" height="1034" viewBox="0 0 1918 1034">
      <path d="M863 242H1016V222L1166 264 1016 306V286H863z" fill="none" stroke="#ed1c24" stroke-width="5.500" />
    </svg>
    <div class="redbox"></div>

    <!-- watermark -->
    <div class="ears"><i></i><i></i></div>
    <div class="wm">
      <svg class="wm-logo" width="66" height="70" viewBox="0 0 66 70">
        <path d="M27 50c0 6-11 7-11-1V12c0-6 5-9 10-6l34 22c5 3 5 9 0 12L29 65c-6 3-10 2-14-1L7 58c-3-2-4-5-4-8V20c0-5 2-8 7-12" fill="none" stroke="#c7cace" stroke-width="4.500" stroke-linecap="round" />
        <path d="M26 27l13 7-13 7z" fill="#c7cace" />
        <path d="M43 27v14" stroke="#c7cace" stroke-width="2.500" />
      </svg>
      <div class="wm-txt">
        <div class="wm-cn">溜溜自学</div>
        <div class="wm-en">ZiXUE.3D66.COM</div>
      </div>
    </div>

    <!-- IME tray -->
    <div class="ime">
      <svg class="ime-s" width="38" height="26" viewBox="0 0 38 26"><path d="M4 0h30l2 18-10 8H8L2 20z" fill="#f4511e" /><path d="M10 5h18M10 5v5h16v7H10" fill="none" stroke="#fff" stroke-width="3.500" /></svg>
      <span class="ime-y">英</span>
      <span class="ime-c">,</span>
      <svg width="22" height="22" viewBox="0 0 22 22"><circle cx="11" cy="11" r="9" fill="none" stroke="#2a8fe8" stroke-width="2" /><circle cx="8" cy="9" r="1.200" fill="#2a8fe8" /><circle cx="14" cy="9" r="1.200" fill="#2a8fe8" /><path d="M6 13c2 4 8 4 10 0" fill="none" stroke="#2a8fe8" stroke-width="1.600" /></svg>
      <svg width="20" height="20" viewBox="0 0 20 20"><path d="M12 2l6 5-9 11H3v-6z" fill="none" stroke="#2a8fe8" stroke-width="2.400" /><path d="M3 12l6 6H3z" fill="#2a8fe8" /></svg>
      <svg width="18" height="22" viewBox="0 0 18 22"><rect x="6" y="1" width="6" height="12" rx="3" fill="#2a8fe8" /><path d="M3 10c0 7 12 7 12 0M9 16v5" fill="none" stroke="#2a8fe8" stroke-width="2" /></svg>
      <svg width="18" height="18" viewBox="0 0 18 18"><path d="M1 1h7v7H1zM1 10h7v7H1zM10 10h7v7h-7z" fill="#2a8fe8" /><path d="M10.500 1.500h6v6h-6z" fill="none" stroke="#2a8fe8" /></svg>
    </div>
  </div>
</template>

<style>
html, body { margin: 0; padding: 0; background: #222; }
</style>

<style scoped>
* { box-sizing: border-box; }
i { font-style: normal; display: block; }
button { font: inherit; color: inherit; padding: 0; margin: 0; cursor: default; }
.app {
  width: 1918px; height: 1034px; position: relative; overflow: hidden;
  display: flex; flex-direction: column;
  font-family: "Noto Sans CJK SC", "Liberation Sans", sans-serif;
  font-size: 14.7px; color: #222; background: #676767;
}
.tri { width: 0; height: 0; border: 4px solid transparent; border-top: 5px solid #333; border-bottom: 0; flex: none; }
.tri-g { border-top-color: #a9a9a9; }
.chev { width: 7px; height: 7px; border-right: 1.2px solid #444; border-bottom: 1.2px solid #444; transform: rotate(45deg); margin-left: auto; margin-right: 9px; margin-top: -3px; flex: none; }
.chev-g { border-color: #a0a0a0; }

/* title bar */
.titlebar { height: 31px; display: flex; border-bottom: 1px solid #333; flex: none; background: #fff; }
.qa { width: 530px; display: flex; align-items: center; padding-left: 46px; background: linear-gradient(#9b9b9b, #6f6f6f); }
.qa-i { width: 30px; height: 24px; border: 0; background: none; display: flex; align-items: center; justify-content: center; flex: none; }
.qa-d1 { margin: 0 6px 0 -1px; }
.qa-combo { width: 223px; height: 26px; margin-left: 4px; background: #e6e6e6; display: flex; align-items: center; padding-left: 2px; font-size: 15px; color: #222; }
.qa-combo span { margin-left: 3px; font-family: "Open Sans", "Noto Sans CJK SC", sans-serif; }
.tri-r { margin-left: auto; margin-right: 5px; }
.qa-more { width: 19px; display: flex; justify-content: center; align-items: center; height: 100%; position: relative; }
.qa-more::before { content: ""; position: absolute; top: 9px; left: 5px; width: 9px; height: 2px; background: #333; }
.apptitle { width: 628px; text-align: center; line-height: 30px; font-family: "Open Sans", "Noto Sans CJK SC", sans-serif; font-size: 15.7px; color: #111; padding-left: 0; white-space: pre; }
.infobar { width: 556px; display: flex; background: linear-gradient(#8c8c8c, #757575); }
.ib-arrow { width: 17px; position: relative; background: linear-gradient(#777, #999); }
.ib-arrow::after { content: ""; position: absolute; left: 5px; top: 11px; border: 5px solid transparent; border-left: 6px solid #111; border-right: 0; }
.ib-search { width: 224px; background: #f7f7f7; margin: 2px 0 2px; font-size: 14px; font-style: italic; color: #7b7b7b; padding-left: 4px; line-height: 26px; letter-spacing: -0.2px; }
.ib-tools { flex: 1; display: flex; align-items: center; padding-left: 6px; position: relative; border-top: 1px solid #aaa; }
.ib-user { margin-left: 10px; }
.ib-login { margin-left: 7px; color: #f1f1f1; font-size: 15px; width: 32px; }
.ib-d1 { margin-left: 76px; border-width: 3px; border-top-width: 4px; margin-right: 13px; }
.ib-tri { margin-left: 8px; }
.ib-d2 { margin-left: 3px; border-width: 3px; border-top-width: 4px; }
.ib-help { margin-left: 26px; }
.ib-d3 { margin-left: 12px; border-width: 3px; border-top-width: 4px; }
.winctl { width: 204px; background: #fff; display: flex; align-items: center; padding-left: 50px; gap: 45px; padding-bottom: 4px; }

/* menu bar */
.menubar { height: 25px; flex: none; display: flex; align-items: center; padding-left: 55px; padding-bottom: 2px; background: linear-gradient(#8f8f8f, #525252); color: #e6e6e6; font-size: 14.7px; position: relative; }
.menu { margin-right: 28.3px; white-space: nowrap; text-shadow: 0 0 1px #333; }
.mdi { position: absolute; right: 0; top: 4px; width: 48px; display: flex; align-items: center; gap: 5px; color: #111; font: bold 13px "Liberation Sans", sans-serif; }
.mdi-min { width: 10px; height: 2px; background: #111; margin-top: 9px; }

/* doc tabs */
.docbar { height: 32px; flex: none; background: linear-gradient(#8b8b8b, #9c9c9c); display: flex; align-items: flex-end; padding-left: 28px; position: relative; border-bottom: 1px solid #a8a8a8; }
.doctab { width: 155px; height: 28px; background: linear-gradient(#b5b5b5, #9d9d9d); border-radius: 12px 12px 0 0; display: flex; align-items: center; padding-left: 12px; color: #111; font-size: 15px; }
.doctab b { margin-left: 23px; font-size: 11px; color: #555; font-weight: bold; }
.docplus { width: 27px; height: 21px; margin: 0 0 3px 7px; background: #8f8f8f; border: 1px solid #6e6e6e; border-radius: 8px 3px 8px 3px; display: flex; align-items: center; justify-content: center; color: #bbb; font-weight: bold; }

/* toolbars */
.tbzone { height: 61px; flex: none; background: #676767; padding-top: 6px; display: flex; flex-direction: column; gap: 4px; }
.tbrow1, .tbrow2 { display: flex; height: 23px; padding-left: 2px; }
.tb { display: flex; align-items: center; height: 23px; background: #f0f0f0; border-bottom: 1px solid #222; border-right: 1px solid #333; }
.tb1 { width: 647px; }
.tb2 { width: 596px; margin-left: 1px; }
.grip { width: 6px; height: 100%; background: repeating-linear-gradient(#9a9a9a 0 1px, #444 1px 2px); margin-right: 1px; flex: none; }
.slot { width: 22.7px; height: 22px; display: flex; align-items: center; justify-content: center; flex: none; }
.slot svg { transform: scale(.9); }
.tdrop { width: 12px; display: flex; justify-content: center; flex: none; }
.sep { flex: none; height: 18px; position: relative; }
.sep::before { content: ""; position: absolute; left: 50%; top: 0; bottom: 0; width: 1px; background: #aaa; }
.sp5 { width: 5px; } .sp6 { width: 6px; } .sp7 { width: 7px; } .sp8 { width: 8px; } .sp10 { width: 10px; }
.sep-n { width: 7px; }
.tbc { display: flex; align-items: center; height: 100%; }
.slot-c { width: 24px; display: flex; justify-content: center; }
.slot-c svg { transform: scale(.9); }
.gcombo { height: 100%; background: #c9c9c9; color: #7a7a7a; display: flex; align-items: center; font-family: "Open Sans", sans-serif; font-size: 15.4px; white-space: pre; }
.c1 { width: 118px; padding-left: 18px; }
.c2 { width: 119px; padding-left: 4px; }
.tb3 { width: 487px; background: #c6c6c6; height: 23px; }
.wcombo { width: 172px; margin-left: 1px; height: 100%; background: #c6c6c6; color: #7a7a7a; display: flex; align-items: center; padding-left: 8px; font-family: "Open Sans", "Noto Sans CJK SC", sans-serif; font-size: 16px; }
.slot-w { background: #eee; width: 23px; }
.grip-m { margin-left: 3px; margin-right: 1px; }
.layerc { display: flex; align-items: center; gap: 0; margin-left: 3px; }
.layerc > svg { margin-right: -1px; }
.lay0 { margin-left: 3px; color: #666; font-size: 15px; }

/* work */
.work { height: 805px; flex: none; display: flex; }
.leftcol { width: 30px; flex: none; background: #767676; padding: 0 0 0 1px; }
.vtool { background: #f0f0f0; border: 1px solid #333; border-top: 0; width: 24px; display: flex; flex-direction: column; align-items: center; }
.vgrip { width: 100%; height: 8px; flex: none; background: #5a5a5a; position: relative; }
.vgrip::after { content: ""; position: absolute; left: 5px; right: 5px; top: 3px; height: 2px; background: repeating-linear-gradient(90deg, #ddd 0 1px, transparent 1px 2px); }
.vslot { width: 22px; height: 22px; display: flex; align-items: center; justify-content: center; flex: none; }
.leftcol .vtool { height: 448px; }
.center { width: 1857px; flex: none; display: flex; flex-direction: column; }
.vp-row { height: 779px; display: flex; flex: none; }
.viewport { width: 1835px; position: relative; background: #212830; border-top: 1px solid #a6a6a6; border-left: 1px solid #a6a6a6; overflow: hidden; }
.vp-label { position: absolute; left: 3px; top: 3px; font-size: 13px; color: #c8c8c8; z-index: 1; letter-spacing: -0.2px; }
.drawing { position: absolute; left: -1px; top: -1px; display: block; }
.cube-n { font-size: 18px; fill: #8d9095; text-anchor: middle; font-weight: bold; }
.cube-top { font-size: 24px; fill: #55585c; text-anchor: middle; }
.cube-w { font-size: 13px; fill: #5f606c; font-family: "Liberation Sans", sans-serif; }
.vscroll { width: 22px; background: #f0f0f0; position: relative; display: flex; flex-direction: column; align-items: center; }
.sc-up { width: 8px; height: 8px; border-left: 2px solid #444; border-top: 2px solid #444; transform: rotate(45deg); margin-top: 12px; }
.sc-thumb { position: absolute; top: 362px; left: 1px; width: 19px; height: 22px; background: #cdcdcd; }
.sc-down { width: 8px; height: 8px; border-right: 2px solid #444; border-bottom: 2px solid #444; transform: rotate(45deg); margin-top: auto; margin-bottom: 12px; }
.layouttabs { height: 19px; flex: none; background: #f0f0f0; display: flex; align-items: stretch; font-size: 14px; border-bottom: 1px solid #fff; }
.navbtns { display: flex; width: 73px; margin-left: 1px; border: 1px solid #bbb; border-width: 0 1px; }
.navbtns span { flex: 1; text-align: center; border-right: 1px solid #ccc; font-size: 12px; line-height: 18px; color: #444; font-family: "DejaVu Sans", sans-serif; white-space: nowrap; letter-spacing: -3px; overflow: hidden; }
.ltab { width: 56px; text-align: center; line-height: 19px; color: #222; clip-path: polygon(0 0, 100% 0, 90% 100%, 10% 100%); border-bottom: 1px solid #777; }
.ltab-on { background: #212830; color: #f5f5f5; margin-left: 1px; width: 52px; }
.hs-spacer { width: 1028px; border-right: 1px solid #999; }
.hs-l, .hs-r { width: 7px; height: 7px; border-left: 2px solid #444; border-bottom: 2px solid #444; transform: rotate(45deg); margin: 6px 0 0 11px; }
.hs-track { width: 592px; }
.hs-r { transform: rotate(225deg); margin-left: 0; }
.rightcol { width: 31px; flex: none; background: #6c6c6c; padding-left: 6px; display: flex; flex-direction: column; gap: 2px; }
.vtool-r1 { height: 403px; }
.vtool-r2 { height: 146px; }

/* command */
.cmd { height: 54px; flex: none; display: flex; background: #f0f0f0; }
.cmd-side { width: 29px; background: linear-gradient(#6a6a6a, #454545); color: #eee; display: flex; flex-direction: column; align-items: center; padding-top: 5px; }
.cmd-side b { font: bold 17px "Liberation Sans", sans-serif; margin-top: 5px; }
.cmd-grip { width: 22px; height: 6px; background-image: radial-gradient(#aaa 0.8px, transparent 1px); background-size: 3.5px 3.5px; }
.cmd-main { flex: 1; display: flex; flex-direction: column; }
.cmd-hist { height: 25px; background: #c6c6c6; }
.cmd-line { height: 29px; background: #fff; border-top: 1px solid #8a8a8a; display: flex; align-items: center; padding-left: 6px; padding-bottom: 1px; gap: 3px; }
.cmd-ic { width: 18px; height: 20px; background: #c8d0d6; color: #555; font: 11px/20px "Liberation Mono", monospace; text-align: center; letter-spacing: -1px; }
.cmd-line .tri { margin: 0 1px 0 3px; }
.cmd-text { font: 18px "Liberation Sans", sans-serif; color: #111; }

/* status */
.status { height: 22px; flex: none; display: flex; align-items: center; background: linear-gradient(#6d6d6d, #a5a5a5); border-top: 1px solid #111; position: relative; }
.coords { width: 190px; padding-left: 12px; font: 14px "Liberation Mono", monospace; color: #222; letter-spacing: -0.4px; white-space: pre; }
.st-icons { display: flex; height: 100%; }
.st-i { width: 22px; height: 100%; background: #9e9e9e; border-right: 1px solid #777; display: flex; align-items: center; justify-content: center; flex: none; }
.st-on { background: linear-gradient(#a9d8ef, #7ebfdf); }
.st-right { position: absolute; left: 1558px; top: 0; bottom: 0; display: flex; }
.st-model { width: 34px; background: #9e9e9e; color: #111; text-align: center; font-size: 15px; line-height: 22px; border-right: 1px solid #777; }
.st-gap { width: 22px; background: #8a8a8a; }
.wall { height: 4px; flex: none; background: #3b2f31; }

/* logo */
.applogo { position: absolute; left: 0; top: 0; width: 41px; height: 41px; background: linear-gradient(#9b9b9b, #5f5f5f); border: 1px solid #222; border-top: 0; display: flex; align-items: center; padding-left: 2px; }
.logo-d { border-width: 3px; border-top-width: 4px; margin: 0 0 0 -1px; }

/* dialog */
.dlg { position: absolute; left: 489px; top: 117px; width: 998px; height: 638px; background: #f0f0f0; border: 1px solid #00b08f; box-shadow: 0 0 14px rgba(0, 0, 0, .35); font-size: 14.7px; line-height: 20px; }
.dlg-title { height: 32px; margin: -1px -1px 0; background: #00b08f; display: flex; align-items: center; padding: 0 0 1px 2px; color: #111; font-size: 15px; position: relative; }
.dlg-ic { margin-right: 6px; }
.dlg-x { margin-left: auto; margin-right: 18px; }
.dlg-body { padding: 20px 0 0 10px; }
.dlg-cols { display: flex; gap: 15px; }
.dl { width: 655px; display: flex; flex-direction: column; }
.dr { width: 300px; display: flex; flex-direction: column; }
.grp { border: 1px solid #dcdcdc; position: relative; flex: none; }
.gl { position: absolute; left: 7px; top: -12px; background: #f0f0f0; padding: 0 2px; line-height: 20px; white-space: nowrap; }
.gl-up { top: -14px; }
.m { font-family: "Liberation Mono", monospace; font-size: 12.25px; line-height: 0; }
.m-s { font-family: "Liberation Mono", monospace; font-size: 14px; line-height: 0; }
.dis { color: #8a8a8a; }
.row { display: flex; align-items: center; }
.row-top { align-items: flex-start; }
.lb { width: 87px; flex: none; }
.lb23 { line-height: 23px; }
.lb25 { line-height: 25px; }
.combo { background: #e1e1e1; border: 1px solid #adadad; display: flex; align-items: center; padding-left: 3px; flex: none; }
.combo-dis { background: #cccccc; border-color: #cccccc; }
.combo-act { background: #cce4f7; border-color: #005499; }
.cw390 { width: 390px; } .cw134 { width: 134px; } .cw199 { width: 199px; } .cw93 { width: 93px; } .cw227 { width: 227px; }
.h20 { height: 20px; } .h22 { height: 22px; } .h23 { height: 23px; } .h24 { height: 24px; }
.btn { border: 1px solid #adadad; background: #e1e1e1; display: flex; align-items: center; justify-content: center; flex: none; line-height: 20px; padding-bottom: 1px; }
.btn-dis { background: #cccccc; border-color: #cccccc; color: #8a8a8a; }
.btn-add { width: 130px; height: 23px; margin-left: 7px; margin-top: 1px; }
.btn-prop { width: 130px; height: 25px; margin-left: 7px; }
.g-page { height: 66px; padding: 24px 0 0 18px; }
.g-printer { height: 171px; margin-top: 15px; padding: 12px 0 0 18px; }
.pr-ic { margin-right: 4px; flex: none; }
.pr-main { display: flex; margin-top: 6px; }
.pr-info { width: 483px; flex: none; }
.info { display: flex; height: 28px; align-items: center; }
.ck { display: flex; align-items: center; gap: 5px; white-space: nowrap; }
.ck-file { margin-top: 10px; }
.cb { width: 16px; height: 16px; border: 1px solid #333; background: #fff; flex: none; position: relative; }
.cb-on::after { content: ""; position: absolute; left: 4px; top: 1px; width: 6px; height: 10px; border-right: 1.6px solid #333; border-bottom: 1.6px solid #333; transform: rotate(40deg); }
.cb-dis { border-color: #d4d4d4; }
.cb-dis.cb-on { background: #ececec; }
.cb-dis.cb-on::after { border-color: #bbb; }
.paper { margin-top: 7px; display: block; flex: none; }
.p-t { font: 11px "Liberation Mono", monospace; fill: #fff; }
.gr-row { display: flex; }
.r-size { margin-top: 21px; gap: 9px; }
.g-size { width: 471px; height: 54px; padding: 15px 0 0 18px; }
.cmono { width: 439px; font-family: "Liberation Mono", monospace; font-size: 12.25px; white-space: pre; }
.cj { font-family: "Noto Sans CJK SC", sans-serif; font-size: 14.7px; }
.g-copies { width: 175px; height: 54px; padding: 14px 0 0 45px; }
.spin { width: 78px; height: 26px; background: #f0f0f0; border: 1px solid #d0d0d0; display: flex; align-items: center; padding-left: 4px; position: relative; }
.spb { position: absolute; right: 0; top: 0; bottom: 0; width: 20px; background: #e6e6e6; display: flex; flex-direction: column; align-items: center; justify-content: center; gap: 5px; }
.spb i { border: 4px solid transparent; border-bottom: 5px solid #666; border-top: 0; }
.spb i + i { border-bottom: 0; border-top: 5px solid #666; }
.r-area { margin-top: 17px; gap: 7px; }
.stack { width: 351px; display: flex; flex-direction: column; gap: 15px; flex: none; }
.g-area { height: 80px; padding: 12px 0 0 18px; }
.lb-s { height: 20px; }
.g-area .combo { margin-top: 6px; padding-left: 3px; }
.g-offs { height: 98px; padding: 17px 0 0 18px; }
.lb-x { width: 28px; flex: none; font-size: 13px; }
.inp { background: #f0f0f0; border: 1px solid #d6d6d6; height: 24px; display: flex; align-items: center; padding-left: 3px; flex: none; box-shadow: inset 0 0 0 1px #fafafa; }
.iw94 { width: 94px; } .iw80 { width: 80px; height: 25px; }
.unit { margin-left: 9px; width: 71px; }
.r-y { margin-top: 13px; }
.g-scale { width: 297px; height: 193px; padding: 17px 0 0 11px; }
.s-r1 { margin-top: 11px; }
.lb-sc { width: 68px; flex: none; }
.s-r2 { margin: 13px 0 0 68px; align-items: flex-start; }
.s-r2 .combo { margin-left: 4px; padding-left: 3px; }
.eq { margin-left: 10px; line-height: 22px; font-size: 13px; }
.s-r3 { margin: 10px 0 0 68px; }
.unit2 { margin-left: 4px; }
.s-r4 { margin: 11px 0 0 68px; }
.g-style { height: 66px; padding: 24px 0 0 21px; }
.btn-st { width: 24px; height: 23px; margin-left: 2px; }
.g-shade { height: 117px; margin-top: 15px; padding: 14px 0 0 21px; }
.r-combo { width: 264px; border-radius: 2px; }
.c28 { height: 28px; }
.c23 { height: 23px; margin-top: 6px; }
.r-input { width: 264px; height: 25px; margin-top: 10px; border: 1px solid #d6d6d6; }
.g-opts { height: 221px; margin-top: 15px; padding: 4px 0 0 21px; }
.opt { height: 26.3px; }
.g-orient { height: 89px; margin-top: 13px; padding: 11px 0 0 21px; }
.or-main { display: flex; }
.or-list { width: 228px; flex: none; }
.rd { height: 21.5px; }
.rd-cb { margin-top: 8px; height: 16px; }
.radio { width: 16px; height: 16px; border: 1px solid #333; background: #fff; border-radius: 50%; position: relative; flex: none; }
.radio-on::after { content: ""; position: absolute; inset: 2.500px; border-radius: 50%; background: #333; }
.pageic { width: 25px; height: 32px; margin-top: 17px; background: linear-gradient(#e4f0f7, #bcd4e1); border: 1px solid #5c7f92; clip-path: polygon(0 0, 70% 0, 100% 22%, 100% 100%, 0 100%); display: flex; align-items: center; justify-content: center; }
.pageic span { display: block; transform: rotate(90deg); font: 17px "Liberation Sans", sans-serif; color: #222; }
.dlg-btns { display: flex; align-items: center; margin-top: 10px; gap: 8px; padding-left: 1px; }
.dlg-btns .btn { height: 24px; padding-bottom: 3px; }
.btn-pre { width: 106px; }
.btn-apply { width: 144px; margin-left: 326px; }
.btn-ok { width: 100px; border: 2px solid #0078d7; }
.btn-std { width: 100px; }
.more { width: 18px; height: 18px; border: 1px solid #777; border-radius: 50%; margin-left: 2px; display: flex; align-items: center; justify-content: center; background: #f4f4f4; margin-bottom: 8px; }
.more i { width: 7px; height: 7px; border-left: 2.500px solid #222; border-bottom: 2.500px solid #222; transform: rotate(45deg); margin-left: 3px; }
.drop { position: absolute; left: 703px; top: 101px; width: 227px; height: 218px; background: #fff; border: 1px solid #0b5ea8; box-shadow: 3px 3px 4px rgba(0, 0, 0, .3); font: 13.2px/18px "Liberation Mono", monospace; color: #111; }
.di { height: 18px; padding-left: 0; white-space: pre; }
.di-cj { font: 15px/15px "Noto Sans CJK SC", sans-serif; padding-left: 1px; }
.di-cjs { font: 15px/0 "Noto Sans CJK SC", sans-serif; position: relative; top: -1px; }
.di-sel { background: #0078d7; color: #d5f0ff; outline: 1px dotted #111; outline-offset: -1px; }

/* annotation */
.annot { position: absolute; left: 0; top: 0; pointer-events: none; }
.redbox { position: absolute; left: 1175px; top: 185px; width: 267px; height: 283px; border: 5px solid #ed1c24; }

/* watermark */
.ears { position: absolute; left: 1614px; top: 830px; display: flex; gap: 5px; }
.ears i { width: 25px; height: 36px; background: #bcbec1; border-radius: 50%; }
.ears i + i { margin-top: 3px; }
.wm { position: absolute; left: 1472px; top: 848px; width: 340px; height: 160px; background: #1f2e55; display: flex; align-items: flex-start; padding: 46px 0 0 25px; color: #c9ccd2; }
.wm-logo { flex: none; }
.wm-txt { margin-left: 24px; }
.wm-cn { font: bold 45px/44px "Noto Sans CJK SC", sans-serif; letter-spacing: 6px; margin-top: -2px; white-space: nowrap; }
.wm-en { font: 19px/20px "Inter", sans-serif; letter-spacing: 2.8px; margin-top: 5px; white-space: nowrap; }

/* IME */
.ime { position: absolute; left: 1680px; top: 1008px; width: 238px; height: 22px; background: #fff; display: flex; align-items: center; padding-left: 10px; border-bottom: 2px solid #dfe3e6; }
.ime-s { margin-top: -6px; flex: none; }
.ime-y { color: #1c7fe0; font-weight: bold; font-size: 16px; margin-left: 25px; }
.ime-c { color: #1c7fe0; font-weight: bold; margin: -6px 14px 0 18px; }
.ime svg + svg { margin-left: 9px; }
</style>
